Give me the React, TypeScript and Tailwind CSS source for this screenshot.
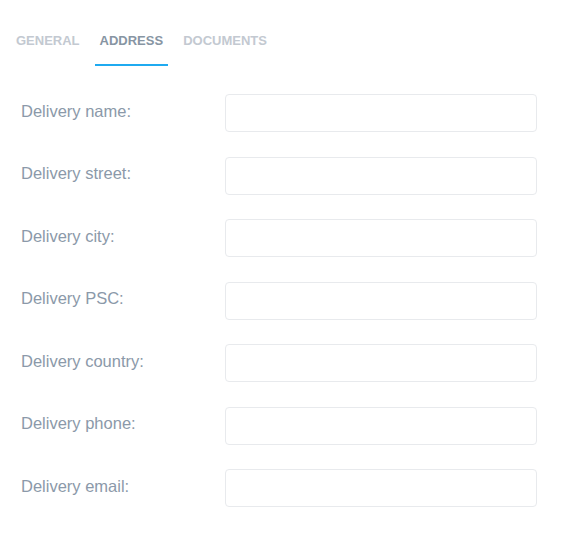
import { useState } from "react";

const tabs = ["General", "Address", "Documents"];

const fields = [
  "Delivery name:",
  "Delivery street:",
  "Delivery city:",
  "Delivery PSC:",
  "Delivery country:",
  "Delivery phone:",
  "Delivery email:",
];

export default function App() {
  const [activeTab, setActiveTab] = useState("Address");
  const [values, setValues] = useState<Record<string, string>>({});

  return (
    <main className="min-h-screen bg-white font-['Liberation_Sans',Arial,sans-serif]">
      {/* tab bar */}
      <div className="flex gap-[10px] pl-[11px] pt-[33px]">
        {tabs.map((tab) => (
          <button
            key={tab}
            type="button"
            onClick={() => setActiveTab(tab)}
            className={`px-[5px] pb-[16px] text-[13px] font-bold uppercase leading-[15px] border-b-[2px] ${
              activeTab === tab
                ? "text-[#8795a3] border-[#1faaf0]"
                : "text-[#c3c9d1] border-transparent"
            }`}
          >
            {tab}
          </button>
        ))}
      </div>

      {/* address fields */}
      <div className="flex flex-col gap-[24.5px] pt-[28px] pl-[21px] w-[537px]">
        {fields.map((label) => (
          <div key={label} className="flex items-center">
            <label className="w-[204px] text-[16.5px] text-[#8b99a9] -mt-[4px]">
              {label}
            </label>
            <input
              type="text"
              value={values[label] || ""}
              onChange={(e) =>
                setValues({ ...values, [label]: e.target.value })
              }
              className="flex-1 h-[38px] rounded-[4px] border border-[#e8eaed] bg-white px-3 text-[14px] outline-none"
            />
          </div>
        ))}
      </div>
    </main>
  );
}
